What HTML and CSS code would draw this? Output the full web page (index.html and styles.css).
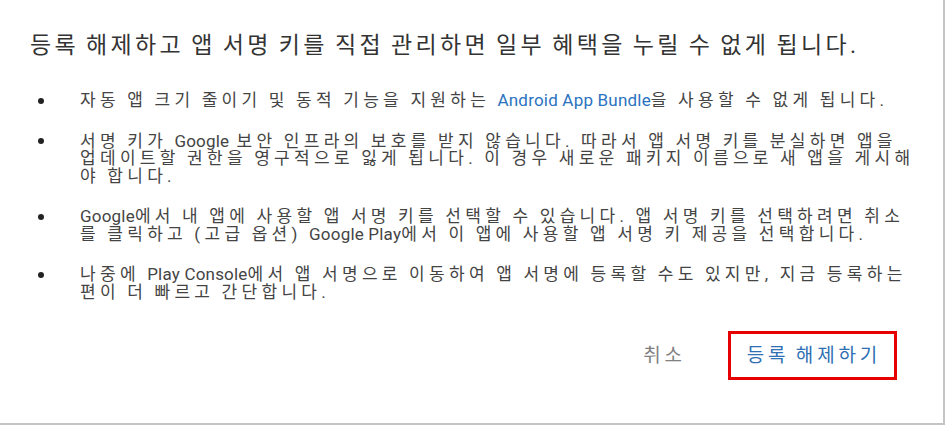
FILE: index.html
```html
<!DOCTYPE html>
<html lang="ko">
<head>
<meta charset="utf-8">
<title>등록 해제</title>
<link rel="stylesheet" href="styles.css">
</head>
<body>
<div class="dialog">
  <h1 class="title">등록 해제하고 앱 서명 키를 직접 관리하면 일부 혜택을 누릴 수 없게 됩니다.</h1>
  <ul class="list">
    <li class="item"><span class="bullet"></span><span class="text">자동 앱 크기 줄이기 및 동적 기능을 지원하는 <a class="link en">Android App Bundle</a>을 사용할 수 없게 됩니다.</span></li>
    <li class="item"><span class="bullet"></span><span class="text">서명 키가 <span class="en">Google</span> 보안 인프라의 보호를 받지 않습니다. 따라서 앱 서명 키를 분실하면 앱을<br>업데이트할 권한을 영구적으로 잃게 됩니다. 이 경우 새로운 패키지 이름으로 새 앱을 게시해<br>야 합니다.</span></li>
    <li class="item"><span class="bullet"></span><span class="text"><span class="en">Google</span>에서 내 앱에 사용할 앱 서명 키를 선택할 수 있습니다. 앱 서명 키를 선택하려면 취소를 클릭하고 (고급 옵션) <span class="en">Google Play</span>에서 이 앱에 사용할 앱 서명 키 제공을 선택합니다.</span></li>
    <li class="item"><span class="bullet"></span><span class="text">나중에 <span class="en">Play Console</span>에서 앱 서명으로 이동하여 앱 서명에 등록할 수도 있지만, 지금 등록하는 편이 더 빠르고 간단합니다.</span></li>
  </ul>
  <div class="actions">
    <button class="btn btn-cancel">취소</button>
    <button class="btn btn-confirm">등록 해제하기</button>
  </div>
</div>
</body>
</html>
```
FILE: styles.css
```css
html, body {
  margin: 0;
  padding: 0;
  background: #ffffff;
}
body {
  font-family: Roboto, "Noto Sans CJK KR", sans-serif;
}
.dialog {
  width: 943px;
  height: 423px;
  border-right: 2px solid #c4c4c4;
  border-bottom: 2px solid #c4c4c4;
  box-sizing: content-box;
  display: flex;
  flex-direction: column;
}
.title {
  margin: 31px 0 0 30px;
  font-size: 23px;
  font-weight: 400;
  line-height: 30px;
  color: #333333;
  letter-spacing: 3.35px;
  word-spacing: -2px;
}
.list {
  list-style: none;
  margin: 31px 0 0 0;
  padding: 0;
  display: flex;
  flex-direction: column;
  gap: 23px;
}
.item {
  display: flex;
  align-items: flex-start;
  font-size: 17px;
  line-height: 17.5px;
  color: #444444;
  letter-spacing: 4.3px;
  word-spacing: -1.2px;
}
.en {
  letter-spacing: 0.2px;
  word-spacing: 0;
}
.bullet {
  flex: 0 0 80px;
  display: flex;
  justify-content: flex-start;
  padding-left: 38px;
  box-sizing: border-box;
  height: 17.5px;
  align-items: center;
}
.bullet::before {
  content: "";
  width: 6px;
  height: 6px;
  border-radius: 50%;
  background: #222;
}
.text {
  width: 836px;
}
.link {
  color: #2a73c0;
  text-decoration: none;
}
.actions {
  display: flex;
  justify-content: flex-end;
  align-items: center;
  margin-top: auto;
  margin-bottom: 43px;
  margin-right: 46px;
  gap: 42px;
}
.btn {
  font-family: Roboto, "Noto Sans CJK KR", sans-serif;
  font-size: 19px;
  line-height: 23px;
  letter-spacing: 3.8px;
  word-spacing: -2px;
  background: none;
  border: none;
  padding: 0;
  cursor: pointer;
}
.btn-cancel {
  color: #808080;
}
.btn-confirm {
  color: #2f6fb3;
  border: 3px solid #e60000;
  padding: 10px 13px 10px 16px;
}
```
